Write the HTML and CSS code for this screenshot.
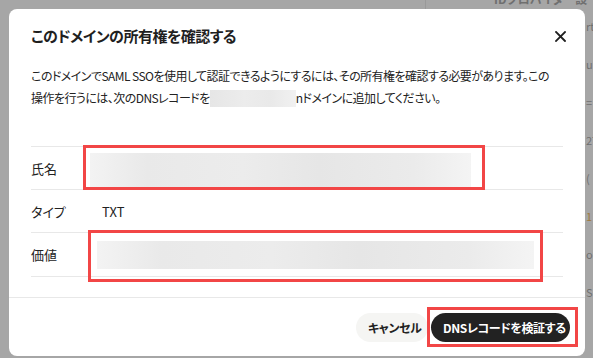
FILE: index.html
```html
<!DOCTYPE html>
<html lang="ja">
<head>
    <meta charset="UTF-8">
    <meta name="viewport" content="width=device-width, initial-scale=1.0">
    <title>ドメインの所有権を確認</title>
    <link rel="stylesheet" href="styles.css">
</head>
<body>
    <div class="backdrop">
        <span class="bg-divider"></span>
        <span class="bg-text">IDプロバイダー設定</span>
        <div class="bg-side">
            <span>rt</span>
            <span>u</span>
            <span>=</span>
            <span>2T</span>
            <span>(</span>
            <span class="orange">1</span>
            <span>or</span>
            <span>S</span>
        </div>
    </div>

    <div class="modal">
        <div class="modal-header">
            <h1>このドメインの所有権を確認する</h1>
            <button type="button" class="close-btn" aria-label="閉じる">
                <svg width="11" height="11" viewBox="0 0 11 11">
                    <path d="M1 1 L10 10 M10 1 L1 10" stroke="#1f1f1f" stroke-width="1.8" stroke-linecap="square"/>
                </svg>
            </button>
        </div>

        <p class="description">
            このドメインでSAML SSOを使用して認証できるようにするには、その所有権を確認する必要があります。この<br>操作を行うには、次のDNSレコードを<span class="masked-domain"></span>nドメインに追加してください。
        </p>

        <div class="record-table">
            <div class="record-row">
                <div class="record-label">氏名</div>
                <div class="record-value">
                    <span class="masked masked-name">
                        <span class="highlight highlight-name"></span>
                    </span>
                </div>
            </div>
            <div class="record-row">
                <div class="record-label">タイプ</div>
                <div class="record-value">TXT</div>
            </div>
            <div class="record-row">
                <div class="record-label">価値</div>
                <div class="record-value">
                    <span class="masked masked-value">
                        <span class="highlight highlight-value"></span>
                    </span>
                </div>
            </div>
        </div>

        <div class="modal-footer">
            <button type="button" class="btn btn-cancel">キャンセル</button>
            <button type="button" class="btn btn-verify">
                DNSレコードを検証する
                <span class="highlight highlight-btn"></span>
            </button>
        </div>
    </div>
</body>
</html>
```

FILE: styles.css
```css
* {
    box-sizing: border-box;
}

body {
    margin: 0;
    padding: 9px 8px 0 9px;
    background-color: #a6a6a6;
    font-family: "Noto Sans CJK JP", "Noto Sans", sans-serif;
    font-feature-settings: "palt";
    color: #222;
    height: 358px;
    overflow: hidden;
    position: relative;
}

/* page behind the overlay */
.backdrop {
    position: absolute;
    inset: 0;
    color: #6f6f6f;
    font-size: 12px;
}

.bg-divider {
    position: absolute;
    left: 425px;
    top: 0;
    width: 1px;
    height: 9px;
    background-color: #999;
}

.bg-text {
    position: absolute;
    left: 494px;
    top: -10px;
    font-weight: bold;
}

.bg-side {
    position: absolute;
    left: 586px;
    top: 20px;
    display: flex;
    flex-direction: column;
    gap: 26px;
    font-size: 11px;
    line-height: 12px;
}

.bg-side .orange {
    color: #a07a40;
}

.modal {
    position: relative;
    width: 576px;
    height: 347px;
    background-color: #fff;
    border-radius: 8px;
    display: flex;
    flex-direction: column;
}

.modal-header {
    display: flex;
    justify-content: space-between;
    align-items: center;
    padding: 15px 17px 0 22px;
}

.modal-header h1 {
    margin: 0;
    font-size: 15px;
    letter-spacing: -0.5px;
    line-height: 24px;
    font-weight: bold;
    color: #1f1f1f;
}

.close-btn {
    border: none;
    background: none;
    padding: 0;
    width: 16px;
    height: 16px;
    display: flex;
    align-items: center;
    justify-content: center;
}

.description {
    margin: 17px 22px 0;
    font-size: 12px;
    letter-spacing: -0.55px;
    line-height: 22px;
    color: #222;
}

.masked-domain {
    display: inline-block;
    width: 86px;
    height: 17px;
    vertical-align: -4px;
    background: linear-gradient(90deg, #e6e6e6, #ececec 40%, #e9e9e9 70%, #f1f1f1);
}

.record-table {
    margin: 37px 22px 0;
    border-bottom: 1px solid #e8e8e8;
}

.record-row {
    display: grid;
    grid-template-columns: 71px 1fr;
    align-items: center;
    height: 43px;
    border-top: 1px solid #e8e8e8;
    font-size: 13px;
}

.record-row:last-child {
    height: 44px;
}

.record-value {
    display: flex;
    align-items: center;
}

.masked {
    position: relative;
    display: block;
    background: linear-gradient(90deg, #f3f3f3, #e9e9e9 15%, #ececec 40%, #e6e6e6 60%, #ebebeb 85%, #f4f4f4);
}

.masked-name {
    width: 381px;
    height: 34px;
    margin-left: -12px;
    margin-top: 3px;
}

.masked-value {
    width: 437px;
    height: 28px;
    margin-left: -5px;
}

.highlight {
    position: absolute;
    border: 3px solid #f24646;
}

.highlight-name {
    left: -7px;
    top: -8px;
    right: -14px;
    bottom: -3px;
}

.highlight-value {
    left: -9px;
    top: -11px;
    right: -9px;
    bottom: -13px;
}

.modal-footer {
    margin-top: auto;
    height: 59px;
    border-top: 1px solid #e8e8e8;
    display: flex;
    justify-content: flex-end;
    align-items: center;
    gap: 3px;
    padding: 0 15px 0 0;
}

.btn {
    position: relative;
    height: 29px;
    border: none;
    border-radius: 15px;
    font-family: inherit;
    font-feature-settings: "palt";
    font-size: 12px;
    letter-spacing: -0.4px;
    font-weight: bold;
    white-space: nowrap;
    padding: 0 12px;
}

.btn-cancel {
    width: 72px;
    background-color: #f5f5f3;
    color: #222;
}

.btn-verify {
    background-color: #222;
    color: #fff;
    width: 139px;
}

.highlight-btn {
    left: -4px;
    top: -6px;
    right: -8px;
    bottom: -5px;
}
```
